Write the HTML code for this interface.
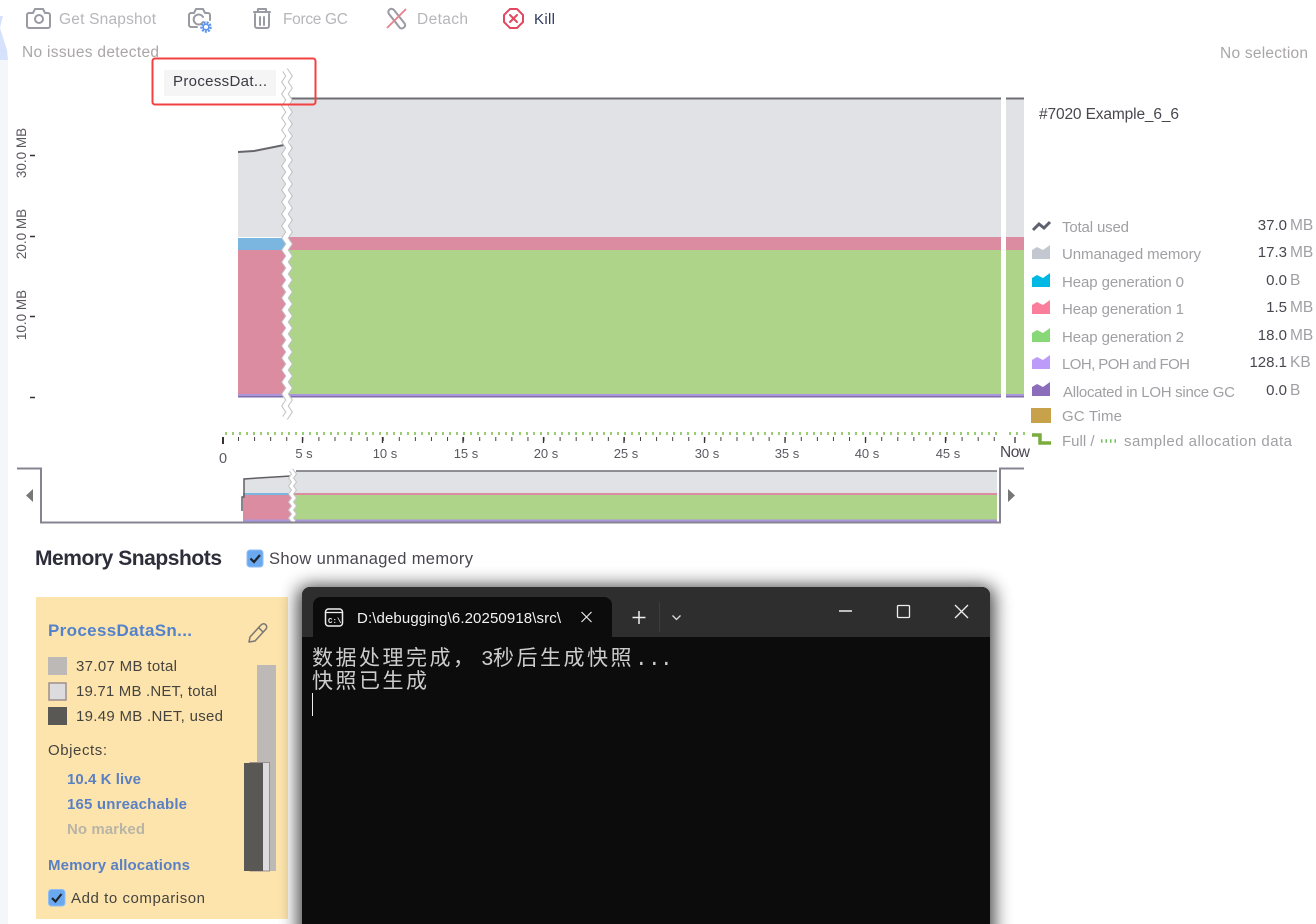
<!DOCTYPE html>
<html lang="zh">
<head>
<meta charset="utf-8">
<title>Memory</title>
<style>
html,body{margin:0;padding:0;background:#fff;width:1316px;height:924px;overflow:hidden}
svg{display:block;position:absolute;left:0;top:0}
text{font-family:"Liberation Sans","Noto Sans CJK SC",sans-serif;white-space:pre}
.tb{font-size:15.5px;fill:#b6b6bb}
.lg{font-size:15px;fill:#a09fa3}
.val{font-size:15px;fill:#4a4650;text-anchor:end}
.unit{font-size:15.5px;fill:#a09fa3}
.tm{font-size:13px;fill:#5c5860;text-anchor:middle}
.yl{font-size:13.5px;fill:#5c5860;text-anchor:middle}
.card{font-size:15px;fill:#45433f}
.lnk{font-size:15px;font-weight:bold;fill:#5a80c4}
.icon{fill:none;stroke:#9a9aa2;stroke-width:2;stroke-linejoin:round;stroke-linecap:round}
.con{font-size:21px;fill:#cccccc;font-family:'Liberation Mono','WenQuanYi Zen Hei','Noto Sans CJK SC',monospace}
</style>
</head>
<body>
<svg width="1316" height="924" viewBox="0 0 1316 924" xmlns="http://www.w3.org/2000/svg">
<defs>
<path id="zz" d="M285 70l4 6l-4 6l4 6l-4 6l4 6l-4 6l4 6l-4 6l4 6l-4 6l4 6l-4 6l4 6l-4 6l4 6l-4 6l4 6l-4 6l4 6l-4 6l4 6l-4 6l4 6l-4 6l4 6l-4 6l4 6l-4 6l4 6l-4 6l4 6l-4 6l4 6l-4 6l4 6l-4 6l4 6l-4 6l4 6l-4 6l4 6l-4 6l4 6l-4 6l4 6l-4 6l4 6l-4 6l4 6l-4 6l4 6l-4 6l4 6l-4 6l4 6l-4 6l4 6l-4 6"/>
<path id="zs" d="M291 470l3 4l-3 4l3 4l-3 4l3 4l-3 4l3 4l-3 4l3 4l-3 4l3 4l-3 4l3 4"/>
<filter id="sh" x="-10%" y="-10%" width="120%" height="120%"><feGaussianBlur stdDeviation="9"/></filter>
</defs>

<!-- left strip -->
<rect x="0" y="0" width="8" height="924" fill="#f5f6fa"/>
<rect x="0" y="0" width="8" height="60" fill="#fff"/>
<polygon points="0,16 3,16 0,28 7,50 8,60 0,60" fill="#d6e2fc"/>

<!-- toolbar -->
<g class="icon">
<path d="M29 13h4l2-4h8l2 4h3a2 2 0 0 1 2 2v11a2 2 0 0 1-2 2h-19a2 2 0 0 1-2-2v-11a2 2 0 0 1 2-2z"/>
<circle cx="39" cy="19" r="4"/>
<path d="M197 27h-6a2 2 0 0 1-2-2v-10a2 2 0 0 1 2-2h3l2-4h7l2 4h3a2 2 0 0 1 2 2v5"/>
<path d="M203 22a5 5 0 1 1 0-5"/>
<path d="M254 12h16M258 12v-3h8v3M255 14v12a2 2 0 0 0 2 2h10a2 2 0 0 0 2-2v-12M260 17v8M264 17v8"/>
<path d="M389 14l11 14a3.500 3.500 0 0 0 5-4l-11-14a3 3 0 0 0-5 4l8 10"/>
</g>
<circle cx="206" cy="27" r="4.500" fill="none" stroke="#5c94ee" stroke-width="2.500" stroke-dasharray="2 1.100"/>
<circle cx="206" cy="27" r="2.800" fill="none" stroke="#5c94ee" stroke-width="1.500"/>
<path d="M387 28L406 9" stroke="#e8808c" stroke-width="1.800"/>
<path d="M510 9h7l6 6v7l-6 6h-7l-6-6v-7z" fill="none" stroke="#e2485f" stroke-width="2" stroke-linejoin="round"/>
<path d="M510 15l7 7M517 15l-7 7" stroke="#e2485f" stroke-width="2" stroke-linecap="round"/>
<text class="tb" x="59" y="24" textLength="97">Get Snapshot</text>
<text class="tb" x="283" y="24" textLength="65">Force GC</text>
<text class="tb" x="417" y="24" textLength="51">Detach</text>
<text x="534" y="24" font-size="15" fill="#2f3a5e" textLength="21">Kill</text>

<text x="22" y="57" font-size="15.500" fill="#a9a6a6" textLength="137">No issues detected</text>
<text x="1220" y="58" font-size="15.500" fill="#a9a6a6" textLength="88">No selection</text>
<text x="1039" y="119" font-size="15.500" fill="#4a4650" textLength="140">#7020 Example_6_6</text>

<!-- main chart -->
<polygon points="238,152 254,151 284,145 290,145 290,98 1024,98 1024,237 238,237" fill="#e1e2e6"/>
<path d="M238 152l16-1l30-6" fill="none" stroke="#67666c" stroke-width="2"/>
<rect x="238" y="238" width="50" height="12" fill="#7ab6e0"/>
<rect x="238" y="250" width="50" height="144" fill="#dc8ca0"/>
<rect x="288" y="237" width="736" height="13" fill="#dc8ca0"/>
<rect x="288" y="250" width="736" height="144" fill="#aed48a"/>
<rect x="238" y="394" width="786" height="2" fill="#ab96de"/>
<rect x="238" y="396" width="786" height="1.500" fill="#7e6fa8"/>
<rect x="288" y="97.500" width="736" height="2" fill="#6f6e74"/>
<rect x="1001" y="96" width="5" height="303" fill="#fff"/>
<use href="#zz" fill="none" stroke="#c0c0c4" stroke-width="6.500"/>
<use href="#zz" fill="none" stroke="#fff" stroke-width="4.500"/>

<!-- y axis -->
<g stroke="#3b3038" stroke-width="1.500">
<path d="M30 155.500h5M30 236.500h5M30 316.500h5M30 397.500h5"/>
</g>
<text class="yl" transform="translate(26,153) rotate(-90)">30.0 MB</text>
<text class="yl" transform="translate(26,234) rotate(-90)">20.0 MB</text>
<text class="yl" transform="translate(26,315) rotate(-90)">10.0 MB</text>

<!-- time axis -->
<path d="M225 433.500H997M1009 433.500h2M1016 433.500h2M1023 433.500h2" fill="none" stroke="#9ccc70" stroke-width="3" stroke-dasharray="2 5"/>
<path d="M238 439H1000" fill="none" stroke="#4a4045" stroke-width="4" stroke-dasharray="1 15.080"/>
<g stroke="#3b3038" stroke-width="1.300">
<path d="M223 437v7" stroke-width="2"/>
<path d="M302.500 437v6M382.500 437v6M463 437v6M543.500 437v6M624 437v6M704.500 437v6M785 437v6M865.500 437v6M945.500 437v6M1015 437v6"/>
</g>
<text class="tm" x="223" y="463" style="font-size:14.500px">0</text>
<text class="tm" x="304" y="458">5 s</text>
<text class="tm" x="385" y="458">10 s</text>
<text class="tm" x="466" y="458">15 s</text>
<text class="tm" x="546" y="458">20 s</text>
<text class="tm" x="626" y="458">25 s</text>
<text class="tm" x="707" y="458">30 s</text>
<text class="tm" x="787" y="458">35 s</text>
<text class="tm" x="867" y="458">40 s</text>
<text class="tm" x="948" y="458">45 s</text>
<text x="1000" y="457" font-size="15.500" fill="#4a4650" textLength="30">Now</text>

<!-- overview -->
<polygon points="244,479 258,478 291,477 296,471 997,471 997,493 244,493" fill="#e1e2e6"/>
<rect x="243" y="493" width="50" height="2.500" fill="#7ab6e0"/>
<rect x="243" y="495" width="50" height="25" fill="#dc8ca0"/>
<rect x="293" y="493" width="704" height="2" fill="#dc8ca0"/>
<rect x="293" y="495" width="704" height="24.500" fill="#aed48a"/>
<rect x="243" y="519.500" width="754" height="2" fill="#ab96de"/>
<path d="M242 511v-14h2v-18l14-1l33-2" fill="none" stroke="#5f5e64" stroke-width="1.500"/>
<path d="M296 471H997" stroke="#6f6e74" stroke-width="1.400"/>
<use href="#zs" fill="none" stroke="#c4c4c8" stroke-width="5"/>
<use href="#zs" fill="none" stroke="#fff" stroke-width="3"/>
<path d="M17 468.500H41V522.500H1000V468.500H1024" fill="none" stroke="#858490" stroke-width="2"/>
<polygon points="33,489 26,495.500 33,502" fill="#777"/>
<polygon points="1008,489 1015,495.500 1008,502" fill="#777"/>

<!-- snapshot tag -->
<rect x="164" y="70" width="112" height="26" fill="#f5f5f5"/>
<text x="173" y="86" font-size="15" fill="#3a3a44" textLength="94">ProcessDat...</text>
<rect x="152.500" y="58.500" width="163" height="46" rx="2.500" fill="none" stroke="#f34040" stroke-width="2"/>

<!-- legend -->
<path d="M1033 230l6-6l5 4l6-6" fill="none" stroke="#5f6070" stroke-width="3"/>
<path d="M1032 259v-9l5-3l6 3l7-5v14z" fill="#c3c8d0"/>
<path d="M1032 287v-9l5-3l6 3l7-5v14z" fill="#00b8e4"/>
<path d="M1032 314v-9l5-3l6 3l7-5v14z" fill="#fb7d9c"/>
<path d="M1032 342v-9l5-3l6 3l7-5v14z" fill="#88d878"/>
<path d="M1032 369v-9l5-3l6 3l7-5v14z" fill="#bd9bf8"/>
<path d="M1032 396v-9l5-3l6 3l7-5v14z" fill="#8c6dbb"/>
<rect x="1031" y="408" width="20" height="15" fill="#c8a24a"/>
<path d="M1032 435h8v8h11" fill="none" stroke="#7aac3e" stroke-width="3.500"/>
<path d="M1101 441h17" fill="none" stroke="#6fbf5a" stroke-width="3.500" stroke-dasharray="1.500 3"/>
<text class="lg" x="1062" y="232" textLength="67">Total used</text>
<text class="lg" x="1062" y="259" textLength="139">Unmanaged memory</text>
<text class="lg" x="1062" y="287" textLength="122">Heap generation 0</text>
<text class="lg" x="1062" y="314" textLength="122">Heap generation 1</text>
<text class="lg" x="1062" y="342" textLength="122">Heap generation 2</text>
<text class="lg" x="1062" y="369" textLength="128">LOH, POH and FOH</text>
<text class="lg" x="1063" y="397" textLength="172">Allocated in LOH since GC</text>
<text class="lg" x="1062" y="421" textLength="60">GC Time</text>
<text class="lg" x="1062" y="446">Full /</text>
<text class="lg" x="1124" y="446" textLength="168">sampled allocation data</text>

<text class="val" x="1287" y="230">37.0</text><text class="unit" x="1290" y="230">MB</text>
<text class="val" x="1287" y="257">17.3</text><text class="unit" x="1290" y="257">MB</text>
<text class="val" x="1287" y="285">0.0</text><text class="unit" x="1290" y="285">B</text>
<text class="val" x="1287" y="312">1.5</text><text class="unit" x="1290" y="312">MB</text>
<text class="val" x="1287" y="340">18.0</text><text class="unit" x="1290" y="340">MB</text>
<text class="val" x="1287" y="367">128.1</text><text class="unit" x="1290" y="367">KB</text>
<text class="val" x="1287" y="395">0.0</text><text class="unit" x="1290" y="395">B</text>

<!-- memory snapshots header -->
<text x="35" y="565" font-size="21" font-weight="bold" fill="#2e2e3a" textLength="187">Memory Snapshots</text>
<rect x="247" y="550" width="16" height="17" rx="3" fill="#6aa9f0" stroke="#8fbdf2"/>
<path d="M250.500 558.500l3.500 3.500l6-7" fill="none" stroke="#20242c" stroke-width="2.200"/>
<text x="269" y="564" font-size="16.500" fill="#4a4650" textLength="204">Show unmanaged memory</text>

<!-- card -->
<rect x="36" y="597" width="252" height="322" fill="#fde4ac"/>
<text x="48" y="636" font-size="17" font-weight="bold" fill="#5382cc" textLength="144">ProcessDataSn...</text>
<path d="M249 642l1-5l11-12a2.500 2.500 0 0 1 5 4l-11 12zM258 627l5 5" fill="none" stroke="#7a7674" stroke-width="1.500" stroke-linejoin="round"/>
<rect x="48" y="657" width="19" height="18" fill="#bcb9b6"/>
<rect x="49" y="683" width="17" height="17" fill="#dcdcde" stroke="#9d8f8f" stroke-width="1.500"/>
<rect x="48" y="707" width="19" height="18" fill="#5a5854"/>
<text class="card" x="76" y="671" textLength="101">37.07 MB total</text>
<text class="card" x="76" y="696" textLength="141">19.71 MB .NET, total</text>
<text class="card" x="76" y="721" textLength="147">19.49 MB .NET, used</text>
<text class="card" x="48" y="755" textLength="59">Objects:</text>
<text class="lnk" x="67" y="784" textLength="74">10.4 K live</text>
<text class="lnk" x="67" y="809" textLength="120">165 unreachable</text>
<text class="lnk" x="67" y="834" textLength="78" style="fill:#b8b4a6">No marked</text>
<text class="lnk" x="48" y="870" textLength="142">Memory allocations</text>
<rect x="257" y="665" width="19" height="206" fill="#bcb9b6"/>
<rect x="250" y="762.500" width="19.500" height="108.500" fill="#dcdcde" stroke="#9d8f8f"/>
<rect x="244" y="763" width="19" height="108" fill="#5a5854"/>
<rect x="48.500" y="889.500" width="16.500" height="16.500" rx="3" fill="#6aa9f0" stroke="#8fbdf2"/>
<path d="M52 898l3.500 3.500l6-7.500" fill="none" stroke="#20242c" stroke-width="2.200"/>
<text class="card" x="71" y="903" textLength="134">Add to comparison</text>

<!-- terminal -->
<rect x="298" y="586" width="696" height="360" rx="10" fill="#000" opacity=".75" filter="url(#sh)"/>
<path d="M302 924V595a8 8 0 0 1 8-8H982a8 8 0 0 1 8 8V924z" fill="#0c0c0c"/>
<path d="M302 637V595a8 8 0 0 1 8-8H982a8 8 0 0 1 8 8V637z" fill="#2e2e2e"/>
<path d="M313 637v-32a8 8 0 0 1 8-8H604a8 8 0 0 1 8 8v32z" fill="#0c0c0c"/>
<rect x="325.500" y="609" width="17" height="17" rx="3" fill="none" stroke="#eee" stroke-width="1.500"/>
<path d="M326 612.500h16" stroke="#eee" stroke-width="1.300"/>
<text x="328" y="623" font-size="7.500" fill="#eee" font-weight="bold" style="font-family:'Liberation Mono',monospace">C:\</text>
<text x="357" y="623" font-size="15" fill="#f2f2f2" textLength="204">D:\debugging\6.20250918\src\</text>
<rect x="562" y="605" width="14" height="26" fill="#0c0c0c"/>
<path d="M581.500 612l10 10M591.500 612l-10 10" stroke="#e8e8e8" stroke-width="1.200"/>
<path d="M639 611v13M632.500 617.500h13" stroke="#eee" stroke-width="1.500"/>
<path d="M659.500 602v30" stroke="#3d3d3d" stroke-width="1"/>
<path d="M672.500 615.500l4 4l4-4" fill="none" stroke="#ddd" stroke-width="1.300"/>
<path d="M839 611h13" stroke="#eee" stroke-width="1.500"/>
<rect x="897.500" y="605.500" width="12" height="12" rx="1" fill="none" stroke="#eee" stroke-width="1.300"/>
<path d="M955 605l13 13M968 605l-13 13" stroke="#eee" stroke-width="1.300"/>
<text class="con" y="665" x="312 335.500 359 382.500 406 429.500 453 481 493 516.500 540 563.500 587 610.500 635 648 660">数据处理完成，3秒后生成快照...</text>
<text class="con" y="688" x="312 335.500 359 382.500 406">快照已生成</text>
<rect x="312" y="693" width="1" height="23" fill="#eee"/>
</svg>
</body>
</html>
